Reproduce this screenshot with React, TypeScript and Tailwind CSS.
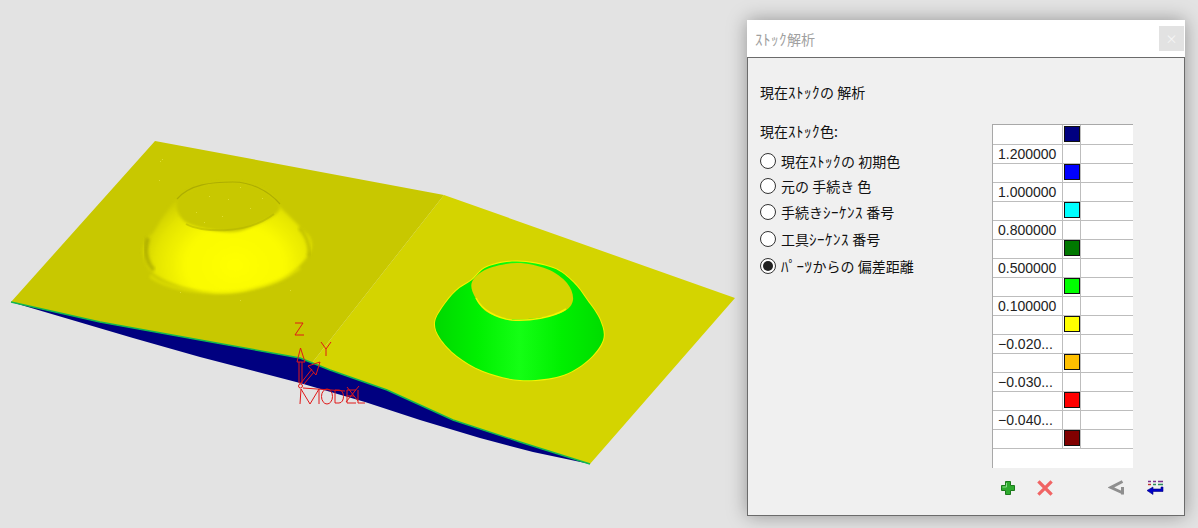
import React from "react";

const cjk = { fontFamily: '"Noto Sans CJK JP", "Liberation Sans", sans-serif' };

/* half-width katakana are drawn a little larger and wider in the reference */
function Jp({ text }: { text: string }) {
  const parts = text.split(/([\uFF61-\uFF9F]+)/);
  return (
    <>
      {parts.map((p, i) =>
        i % 2 === 1 ? (
          <span key={i} className="text-[15px] tracking-[0.5px]">
            {p}
          </span>
        ) : (
          <span key={i}>{p}</span>
        ),
      )}
    </>
  );
}

const radios = [
  { label: "現在ｽﾄｯｸの 初期色", cls: "h-[25px]" },
  { label: "元の 手続き 色", cls: "h-[25px]" },
  { label: "手続きｼｰｹﾝｽ 番号", cls: "h-[27px]" },
  { label: "工具ｼｰｹﾝｽ 番号", cls: "h-[27px]" },
  { label: "ﾊﾟｰﾂからの 偏差距離", cls: "h-[27px]", on: true },
];

const rows: { v?: string; c?: string }[] = [
  { c: "#000080" }, { v: "1.200000" }, { c: "#0000ff" }, { v: "1.000000" }, { c: "#00ffff" },
  { v: "0.800000" }, { c: "#007800" }, { v: "0.500000" }, { c: "#00ff00" }, { v: "0.100000" },
  { c: "#ffff00" }, { v: "−0.020..." }, { c: "#ffc000" }, { v: "−0.030..." }, { c: "#ff0000" },
  { v: "−0.040..." }, { c: "#800000" },
];

/* closed Catmull-Rom spline through the given outline points */
function smooth(p: number[][]) {
  const n = p.length;
  let d = `M${p[0][0]},${p[0][1]}`;
  for (let i = 0; i < n; i++) {
    const a = p[(i - 1 + n) % n], b = p[i], c = p[(i + 1) % n], e = p[(i + 2) % n];
    d += ` C${b[0] + (c[0] - a[0]) / 6},${b[1] + (c[1] - a[1]) / 6} ${c[0] - (e[0] - b[0]) / 6},${c[1] - (e[1] - b[1]) / 6} ${c[0]},${c[1]}`;
  }
  return d + " Z";
}

const leftOuter = [[143,253],[147,238],[153,233],[163,217],[177,200],[200,187],[233,182],[263,190],[283,210],[300,227],[311,240],[307,257],[280,280],[230,293],[187,288],[153,273]];
const leftTop = [[177,201],[187,223],[230,232],[260,223],[280,208],[263,190],[233,182],[200,187]];
const rightOuter = [[472,280],[456,291],[442,308],[435,323],[440,338],[457,356],[483,371],[520,380],[560,376],[587,361],[603,340],[600,320],[587,300],[573,282],[553,268],[517,261.5],[487,267]];
const rightTop = [[472,282],[475,297],[487,312],[510,319],[537,318],[563,312],[573,300],[567,283],[547,269],[517,263],[487,269]];

function Scene() {
  const specks = [
    [162,159],[160,161],[159,180],[209,196],[228,199],[240,187],[262,198],[196,212],[222,216],[250,208],[204,222],[180,292],[240,300],[290,290],
  ];
  return (
    <svg width="747" height="528" viewBox="0 0 747 528" className="block shrink-0">
      <defs>
        <radialGradient id="coneL" gradientUnits="userSpaceOnUse" cx="235" cy="265" r="100" gradientTransform="translate(235 265) scale(1 .8) translate(-235 -265)">
          <stop offset="0" stopColor="#ffff00" />
          <stop offset="0.5" stopColor="#fafa00" />
          <stop offset="0.8" stopColor="#e4e400" />
          <stop offset="1" stopColor="#cccc00" />
        </radialGradient>
        <linearGradient id="coneR" x1="0" x2="1" y1="0" y2="0">
          <stop offset="0" stopColor="#00d800" />
          <stop offset="0.25" stopColor="#00f000" />
          <stop offset="0.5" stopColor="#14ff14" />
          <stop offset="0.75" stopColor="#00f000" />
          <stop offset="1" stopColor="#00dc00" />
        </linearGradient>
        <filter id="s1" x="-10%" y="-10%" width="120%" height="120%">
          <feGaussianBlur stdDeviation="0.7" />
        </filter>
        <filter id="s2" x="-20%" y="-20%" width="140%" height="140%">
          <feGaussianBlur stdDeviation="1.6" />
        </filter>
      </defs>

      {/* underside */}
      <polygon points="11,302 133,338 200,357 300,383 365,402 420,420 480,438 533,452 590,464 520,442 453,420 387,390 330,370 300,358 200,340 100,322" fill="#000080" />
      {/* plates */}
      <polygon points="11,302 155,141 444,195 312,363 300,358 200,340 100,322" fill="#c8c800" />
      <polygon points="444,195 735,298 590,464 520,442 453,420 387,390 330,370 312,363" fill="#d4d400" />
      {/* green edge */}
      <polyline points="11,302 100,322 200,340 300,358 330,370 387,390 453,420 520,442 590,464" fill="none" stroke="#10b850" strokeWidth="1.5" />

      {/* left bump */}
      <path d={smooth(leftOuter)} fill="url(#coneL)" filter="url(#s2)" />
      <path d="M150,276 C175,296 255,302 300,268" fill="none" stroke="#eeee00" strokeWidth="3" opacity="0.5" filter="url(#s2)" />
      <path d="M148,238 C144,250 146,262 154,270" fill="none" stroke="#8a8a00" strokeWidth="4" opacity="0.5" filter="url(#s2)" />
      <path d="M299,228 C307,236 311,248 308,256" fill="none" stroke="#929200" strokeWidth="3" opacity="0.45" filter="url(#s2)" />
      <path d={smooth(leftTop)} fill="#c8c800" filter="url(#s2)" />
      <path d="M177,199 C190,184 212,182 233,182 C250,182 268,190 280,204" fill="none" stroke="#929200" strokeWidth="1.2" opacity="0.5" filter="url(#s1)" />
      <path d="M186,224 C200,232 245,236 274,214" fill="none" stroke="#b0b000" strokeWidth="2" opacity="0.5" filter="url(#s1)" />
      {specks.map(([x, y], i) => (
        <rect key={i} x={x} y={y} width="1" height="1" fill="#dede30" />
      ))}

      {/* right bump */}
      <path d={smooth(rightOuter)} fill="#f4f400" stroke="#f4f400" strokeWidth="2" filter="url(#s1)" />
      <path d={smooth(rightOuter)} fill="url(#coneR)" />
      <path d={smooth(rightTop)} fill="#d4d400" filter="url(#s1)" />
      <path d="M476,298 C482,310 496,318 512,320 C530,321 552,318 566,309" fill="none" stroke="#f4f400" strokeWidth="1.5" filter="url(#s1)" />

      {/* model triad */}
      <g fill="none" stroke="#e01818" strokeWidth="1">
        <path d="M295,323 H303 L295,335 H304" />
        <path d="M321,342 L326,349 L331,342 M326,349 V356" />
        <path d="M297,362 L300.5,348 L305,362 Z" />
        <path d="M299,362 V383 H302 V362" />
        <path d="M301,383 L312,369 M304,384 L314,372 M308,366 L320,362 L316,375 Z" />
        <circle cx="300.5" cy="386" r="2" />
        <path d="M300,404 L301,389 L310,404 L319,389 V404" />
        <ellipse cx="327" cy="396.5" rx="5.5" ry="7.5" />
        <path d="M335,390 V403 H339 C345,403 345,390 339,390 Z" />
        <path d="M356,390 H347 V403 H356 M347,396 H354" />
        <path d="M358,390 V403 H365" />
        <path d="M346,402 L359,386 M347,387 L358,401" />
        <path d="M303,388 L345,391" />
      </g>
    </svg>
  );
}

function Row({ v, c, first }: { v?: string; c?: string; first?: boolean }) {
  return (
    <div className={`flex ${first ? "h-[20px]" : "h-[19px]"} border-b border-[#bdbdbd]`}>
      <div
        className="w-[70px] shrink-0 border-r border-[#bdbdbd] pl-[5px] text-[14px] leading-[18px] text-[#222]"
        style={{ fontFamily: '"Liberation Sans", sans-serif' }}
      >
        {v}
      </div>
      <div className={`w-[18px] shrink-0 border-r border-[#bdbdbd] pl-px ${first ? "pt-px" : ""}`}>
        {c && <div className="h-4 w-4 border border-[#111]" style={{ backgroundColor: c }} />}
      </div>
      <div className="flex-1" />
    </div>
  );
}

function Icons() {
  return (
    <div className="mt-[8px] flex h-[24px] items-center pl-[8px]">
      <svg width="16" height="16" viewBox="0 0 16 16" className="shrink-0">
        <path d="M5.5 1.5h5v4h4v5h-4v4h-5v-4h-4v-5h4z" fill="#2eaa2e" stroke="#1c7a1c" strokeWidth="1" />
        <path d="M6.5 3v4h-4" fill="none" stroke="#8ade8a" strokeWidth="1" />
      </svg>
      <svg width="16" height="16" viewBox="0 0 16 16" className="ml-[21px] shrink-0">
        <path d="M2.5 2.5 13.5 13.5M13.5 2.5 2.5 13.5" stroke="#f06464" strokeWidth="3.2" strokeLinecap="square" />
      </svg>
      <svg width="18" height="16" viewBox="0 0 18 16" className="ml-[55px] shrink-0">
        <path d="M14.5 1.5 3 7.5 15 13" fill="none" stroke="#8f8f8f" strokeWidth="3" />
        <path d="M14.5 7V14.5" fill="none" stroke="#8f8f8f" strokeWidth="3" />
      </svg>
      <svg width="18" height="18" viewBox="0 0 18 18" className="ml-[20px] shrink-0">
        <path d="M2 2.5h3M7 2.5h3M12 2.5h5" stroke="#7a2c8c" strokeWidth="1.4" />
        <path d="M2 5.5h3" stroke="#c03030" strokeWidth="1.4" />
        <path d="M7 5.5h3M12 5.5h5" stroke="#2c8c5c" strokeWidth="1.4" />
        <path d="M17 8V12.5H7V15.5L1 11.5 7 8V10H15V8Z" fill="#0000c8" stroke="#000080" strokeWidth=".6" />
      </svg>
    </div>
  );
}

export default function App() {
  return (
    <div className="flex h-[528px] w-[1198px] overflow-hidden bg-[#e3e3e3]" style={cjk}>
      <Scene />
      <div className="mt-5 flex h-[496px] w-[438px] shrink-0 flex-col border-r border-b border-l border-[#6b6b6b] bg-[#f0f0f0] shadow-[0_0_18px_rgba(0,0,0,0.35)]">
        <div className="-mx-px flex h-[38px] shrink-0 items-center justify-between border-b border-[#6b6b6b] bg-white pr-[1px] pl-[8px]">
          <span className="text-[14px] leading-[20px] text-[#a0a0a0]"><Jp text="ｽﾄｯｸ解析" /></span>
          <div className="flex h-[25px] w-[25px] items-center justify-center bg-[#e2e2e2] text-[12px] leading-none text-[#f6f6f6]">×</div>
        </div>
        <div className="flex min-h-0 flex-1">
          <div className="w-[244px] shrink-0 pl-[12px]">
            <div className="mt-[24px] text-[14px] leading-[20px] text-[#111]"><Jp text="現在ｽﾄｯｸの 解析" /></div>
            <div className="mt-[19px] text-[14px] leading-[20px] text-[#111]"><Jp text="現在ｽﾄｯｸ色:" /></div>
            <div className="mt-[7px] flex flex-col">
              {radios.map((r) => (
                <div key={r.label} className={`flex items-center ${r.cls}`}>
                  <span className="flex h-4 w-4 shrink-0 items-center justify-center rounded-full border border-[#333] bg-white">
                    {r.on && <span className="h-[10px] w-[10px] rounded-full bg-[#222]" />}
                  </span>
                  <span className="ml-[5px] text-[14px] leading-[20px] whitespace-nowrap text-[#111]"><Jp text={r.label} /></span>
                </div>
              ))}
            </div>
          </div>
          <div className="w-[141px] shrink-0 pt-[66px]">
            <div className="h-[344px] border-t border-l border-[#a8a8a8] bg-white">
              {rows.map((r, i) => (
                <Row key={i} v={r.v} c={r.c} first={i === 0} />
              ))}
            </div>
            <Icons />
          </div>
        </div>
      </div>
    </div>
  );
}
